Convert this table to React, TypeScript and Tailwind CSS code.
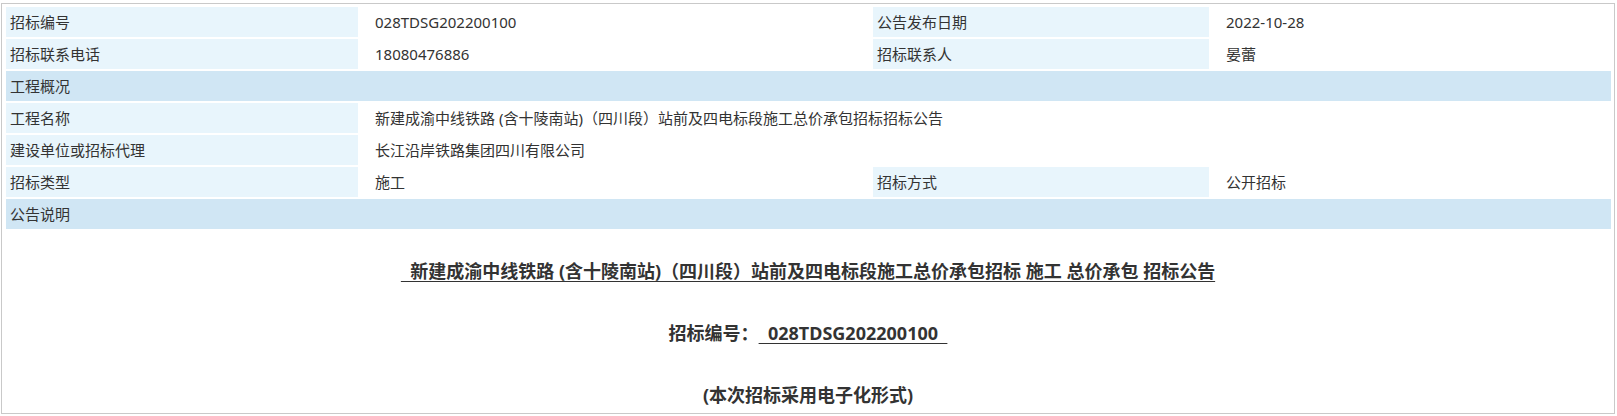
import React from "react";

const labelCls =
  "bg-[#e8f5fc] h-[30px] flex items-center pl-[4px] text-[15px] text-[#333]";
const valueCls =
  "bg-white h-[30px] flex items-center pl-[15px] text-[15px] text-[#333]";
const headCls =
  "bg-[#d0e6f4] h-[30px] flex items-center pl-[4px] text-[15px] text-[#333] col-span-4";

export default function App() {
  return (
    <div
      className="w-[1617px] h-[416px] bg-white pt-[3px] pl-[1px] pr-[2px]"
      style={{ fontFamily: '"Noto Sans", "Noto Sans CJK SC", sans-serif' }}
    >
      <div className="h-[411px] border border-[#c9c9c9] overflow-hidden">
        {/* info table */}
        <div className="grid grid-cols-[352px_511px_336px_400px] gap-[2px] ml-[4px] mt-[3px]">
          <div className={labelCls}>招标编号</div>
          <div className={valueCls}>028TDSG202200100</div>
          <div className={labelCls}>公告发布日期</div>
          <div className={valueCls}>2022-10-28</div>

          <div className={labelCls}>招标联系电话</div>
          <div className={valueCls}>18080476886</div>
          <div className={labelCls}>招标联系人</div>
          <div className={valueCls}>晏蕾</div>

          <div className={headCls}>工程概况</div>

          <div className={labelCls}>工程名称</div>
          <div className={`${valueCls} col-span-3`}>
            新建成渝中线铁路 (含十陵南站)（四川段）站前及四电标段施工总价承包招标招标公告
          </div>

          <div className={labelCls}>建设单位或招标代理</div>
          <div className={`${valueCls} col-span-3`}>长江沿岸铁路集团四川有限公司</div>

          <div className={labelCls}>招标类型</div>
          <div className={valueCls}>施工</div>
          <div className={labelCls}>招标方式</div>
          <div className={valueCls}>公开招标</div>

          <div className={headCls}>公告说明</div>
        </div>

        {/* notice body */}
        <div className="flex flex-col items-center mt-[30px] gap-[38px] text-[18px] leading-[24px] font-bold text-[#333]">
          <p className="whitespace-pre">
            <span className="underline underline-offset-[3px]">
              {"\u00a0 新建成渝中线铁路 (含十陵南站)（四川段）站前及四电标段施工总价承包招标 施工 总价承包 招标公告"}
            </span>
          </p>
          <p className="whitespace-pre">
            招标编号：
            <span className="underline underline-offset-[3px]">{"\u00a0 028TDSG202200100 \u00a0"}</span>
          </p>
          <p>(本次招标采用电子化形式)</p>
        </div>
      </div>
    </div>
  );
}
